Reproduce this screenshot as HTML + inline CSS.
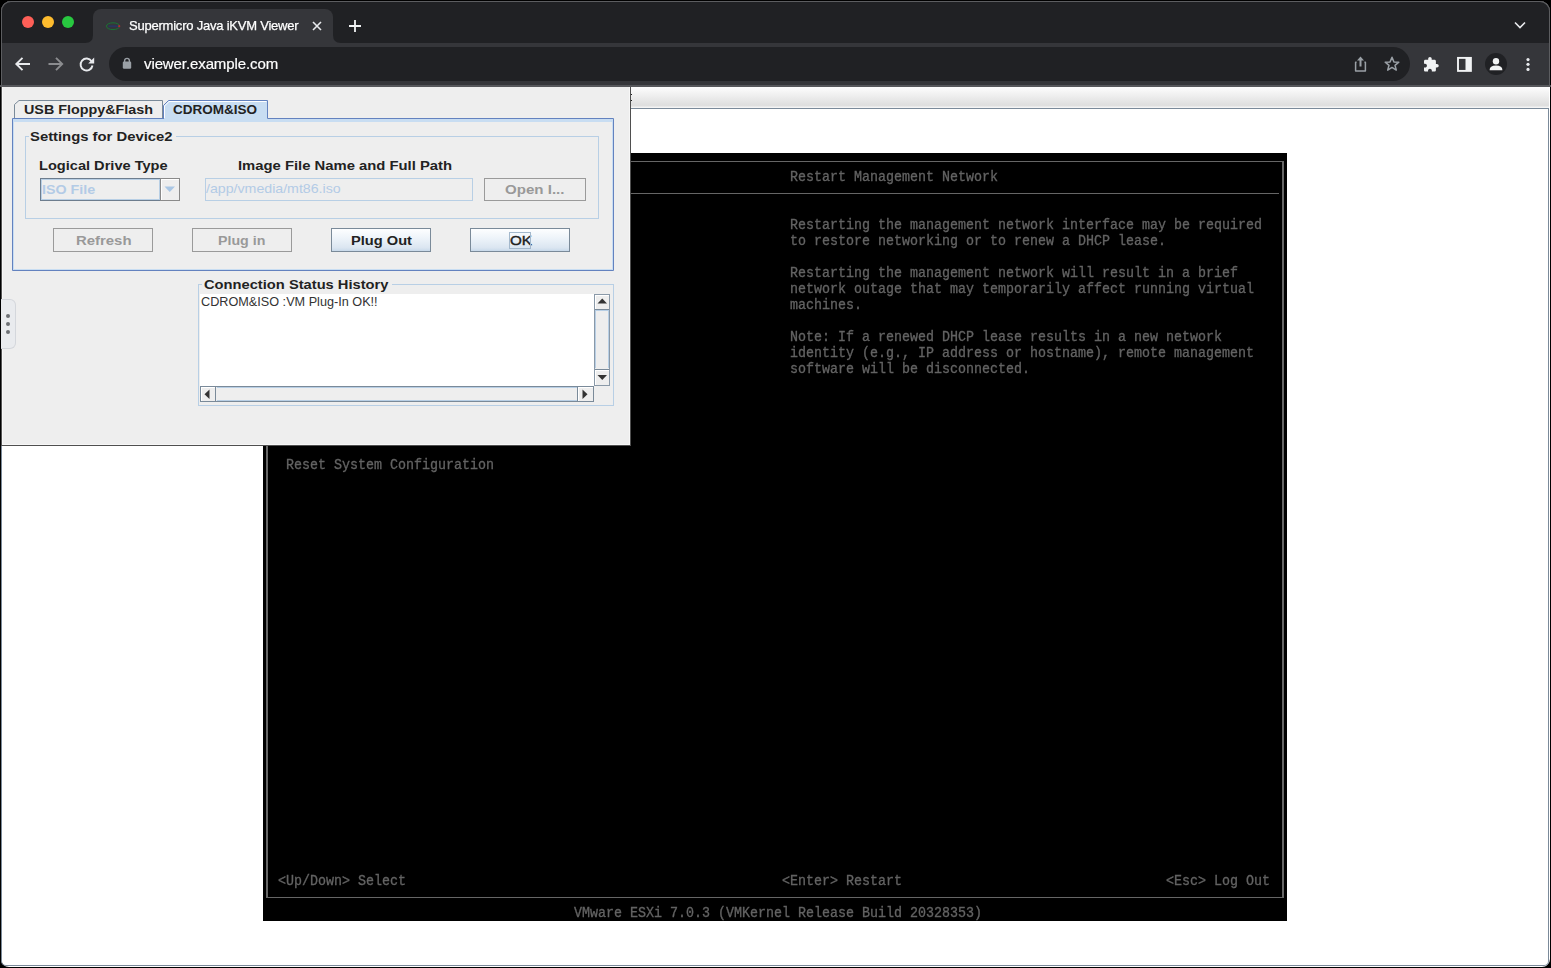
<!DOCTYPE html>
<html><head><meta charset="utf-8">
<style>
*{margin:0;padding:0;box-sizing:border-box}
html,body{width:1551px;height:968px;overflow:hidden;background:#000}
body{position:relative;font-family:"Liberation Sans",sans-serif}
.a{position:absolute}
#win{left:1px;top:1px;width:1549px;height:966px;border-radius:10px 10px 8px 8px;background:#fff;overflow:hidden}
#winb{left:1px;top:1px;width:1549px;height:86px;border-radius:10px 10px 0 0;border:1px solid #5c5d60;border-bottom:none;z-index:50;pointer-events:none}
#tabstrip{left:0;top:0;width:1551px;height:42px;background:#202124}
#toolbar{left:0;top:42px;width:1551px;height:43px;background:#35363a}
#tbline{left:0;top:85px;width:1551px;height:2px;background:#56575b}
#tab{left:93px;top:9px;width:240px;height:34px;background:#35363a;border-radius:8px 8px 0 0}
#omni{left:109px;top:47px;width:1301px;height:34px;background:#202124;border-radius:17px}
.ttxt{color:#e8eaed;white-space:nowrap}
/* page */
#kvmbar{left:630px;top:87px;width:919px;height:20px;background:linear-gradient(#fdfdfd,#eeeeee 45%,#dedede 92%,#ededed)}
#kvmline{left:630px;top:107px;width:919px;height:1px;background:#f4f4f4}
#kvmline2{left:630px;top:108px;width:919px;height:1px;background:#7b8a9a}
#frame{left:1px;top:108px;width:1548px;height:858px;border:1px solid #7b8a9a;border-top:none;border-radius:0 0 5px 5px}
#console{left:263px;top:153px;width:1024px;height:768px;background:#000}
.con{font-family:"Liberation Mono",monospace;color:#636363;will-change:transform;-webkit-text-stroke:0.3px #636363;font-size:13.333px;line-height:14.5454px;white-space:pre;transform:translate(1px,3px) scaleY(1.1);transform-origin:0 0}
.hl{background:#666}
/* dialog */
#dlg{left:1px;top:87px;width:630px;height:359px;background:#eeeeee;border-left:1px solid #555;border-right:1px solid #4f4f4f;border-bottom:1px solid #4f4f4f;box-shadow:inset 1px -1px 0 #f7f7f7, inset -1px 0 0 #f7f7f7}
.jb{font-weight:bold;font-size:13px;color:#222;white-space:nowrap;line-height:15px;transform-origin:0 0}
.jr{font-size:12px;color:#222;white-space:nowrap;line-height:14px;transform-origin:0 0}
.tb{border:1px solid #b8cfe5}
.btnd{border:1px solid #9a9a9a;background:#eeeeee;color:#999;text-align:center}
.btne{border:1px solid #7a8a99;background:linear-gradient(#fdfeff,#eef4fa 40%,#dbe6f1 85%,#c8d9ea);color:#222;text-align:center}
</style></head><body>
<div id="win" class="a">
  <div id="tabstrip" class="a"></div>
  <div id="toolbar" class="a"></div>
</div>
<div id="tbline" class="a"></div>
<div id="tab" class="a"></div>
<svg class="a" style="left:85px;top:35px" width="8" height="8"><path d="M0 8 Q8 8 8 0 L8 8 Z" fill="#35363a"/></svg>
<svg class="a" style="left:333px;top:35px" width="8" height="8"><path d="M0 0 Q0 8 8 8 L0 8 Z" fill="#35363a"/></svg>
<div id="omni" class="a"></div>

<!-- traffic lights -->
<div class="a" style="left:22px;top:16px;width:12px;height:12px;border-radius:6px;background:#fe5f57"></div>
<div class="a" style="left:42px;top:16px;width:12px;height:12px;border-radius:6px;background:#febc2e"></div>
<div class="a" style="left:62px;top:16px;width:12px;height:12px;border-radius:6px;background:#28c840"></div>

<!-- favicon -->
<svg class="a" style="left:104px;top:20px" width="18" height="12">
  <ellipse cx="9" cy="6.2" rx="6.6" ry="3.4" fill="none" stroke="#177a33" stroke-width="0.9"/>
  <rect x="4.5" y="5.3" width="9.5" height="1.8" fill="#2a3560"/>
  <circle cx="15.2" cy="6.2" r="1.1" fill="#b02a30"/>
</svg>
<div class="a ttxt" style="left:129px;top:18px;font-size:13px;letter-spacing:-0.22px;line-height:16px;color:#fff;-webkit-text-stroke:0.25px #fff;will-change:transform">Supermicro Java iKVM Viewer</div>
<svg class="a" style="left:311px;top:20px" width="12" height="12"><path d="M2 2 L10 10 M10 2 L2 10" stroke="#e8eaed" stroke-width="1.6"/></svg>
<svg class="a" style="left:347px;top:18px" width="16" height="16"><path d="M8 2 V14 M2 8 H14" stroke="#f1f3f4" stroke-width="1.8"/></svg>
<svg class="a" style="left:1513px;top:20px" width="14" height="10"><path d="M2 2.5 L7 7.5 L12 2.5" fill="none" stroke="#e8eaed" stroke-width="1.6"/></svg>

<!-- nav icons -->
<svg class="a" style="left:14px;top:56px" width="18" height="16"><path d="M16 8 H3 M8.5 1.8 L2.3 8 L8.5 14.2" fill="none" stroke="#e8eaed" stroke-width="1.9"/></svg>
<svg class="a" style="left:47px;top:56px" width="18" height="16"><path d="M1.5 8 H14.5 M9 1.8 L15.2 8 L9 14.2" fill="none" stroke="#8b8c8f" stroke-width="1.9"/></svg>
<svg class="a" style="left:78px;top:55px" width="18" height="18"><path d="M13.6 6.2 A6 6 0 1 0 14.5 10.5" fill="none" stroke="#e8eaed" stroke-width="1.9"/><path d="M16.2 2.6 V8.6 H10.2 Z" fill="#e8eaed"/></svg>
<svg class="a" style="left:122px;top:57px" width="10" height="13"><path d="M2.6 5 V3.8 A2.4 2.4 0 0 1 7.4 3.8 V5" fill="none" stroke="#9aa0a6" stroke-width="1.4"/><rect x="0.8" y="4.6" width="8.4" height="7.2" rx="1.2" fill="#9aa0a6"/></svg>
<div class="a ttxt" style="left:144px;top:55px;font-size:15px;line-height:18px;letter-spacing:-0.1px;color:#fff;-webkit-text-stroke:0.2px #fff;will-change:transform">viewer.example.com</div>

<!-- right toolbar icons -->
<svg class="a" style="left:1352px;top:55px" width="16" height="18"><path d="M4.6 7.2 H3.6 V15.9 H13.4 V7.2 H12.4" fill="none" stroke="#9aa0a6" stroke-width="1.5" stroke-linejoin="round"/><path d="M8.5 11.5 V3.8" stroke="#9aa0a6" stroke-width="2"/><path d="M5 5.4 L8.5 1.6 L12 5.4 Z" fill="#9aa0a6"/></svg>
<svg class="a" style="left:1383px;top:55px" width="18" height="18"><path d="M9 2.3 L10.9 6.9 L15.8 7.2 L12 10.3 L13.3 15.1 L9 12.4 L4.7 15.1 L6 10.3 L2.2 7.2 L7.1 6.9 Z" fill="none" stroke="#9aa0a6" stroke-width="1.5" stroke-linejoin="round"/></svg>
<svg class="a" style="left:1422px;top:55px" width="18" height="18"><g transform="translate(0.6,1.2) scale(0.7)"><path d="M20.5 11H19V7c0-1.1-.9-2-2-2h-4V3.5C13 2.12 11.88 1 10.5 1S8 2.12 8 3.5V5H4c-1.1 0-1.99.9-1.99 2v3.8H3.5c1.49 0 2.7 1.21 2.7 2.7s-1.21 2.7-2.7 2.7H2V20c0 1.1.9 2 2 2h3.8v-1.5c0-1.49 1.21-2.7 2.7-2.7 1.49 0 2.7 1.21 2.7 2.7V22H17c1.1 0 2-.9 2-2v-4h1.5c1.38 0 2.5-1.12 2.5-2.5S21.88 11 20.5 11z" fill="#f1f3f4"/></g></svg>
<svg class="a" style="left:1456px;top:56px" width="17" height="16"><rect x="2" y="1.9" width="12.9" height="13" fill="none" stroke="#f1f3f4" stroke-width="1.9"/><rect x="9.5" y="1.5" width="5.5" height="13.5" fill="#f1f3f4"/></svg>
<div class="a" style="left:1485px;top:53px;width:22px;height:22px;border-radius:11px;background:#202124"></div>
<svg class="a" style="left:1485px;top:53px" width="22" height="22"><circle cx="11" cy="8.3" r="3.2" fill="#f1f3f4"/><path d="M4.6 17.2 Q4.6 12.6 11 12.6 Q17.4 12.6 17.4 17.2 Z" fill="#f1f3f4"/></svg>
<svg class="a" style="left:1524px;top:56px" width="8" height="16"><circle cx="4" cy="3.6" r="1.6" fill="#e8eaed"/><circle cx="4" cy="8.3" r="1.6" fill="#e8eaed"/><circle cx="4" cy="13.4" r="1.6" fill="#e8eaed"/></svg>

<!-- page content -->
<div id="kvmbar" class="a"></div>
<div id="kvmline" class="a"></div>
<div id="kvmline2" class="a"></div>
<div id="frame" class="a"></div>
<div id="console" class="a"></div>
<!-- console box lines -->
<div class="a hl" style="left:266px;top:161px;width:1018px;height:1px"></div>
<div class="a hl" style="left:266px;top:161px;width:2px;height:737px"></div>
<div class="a hl" style="left:1282px;top:161px;width:2px;height:737px"></div>
<div class="a hl" style="left:266px;top:897px;width:1018px;height:1px"></div>
<div class="a hl" style="left:266px;top:193px;width:1013px;height:1px"></div>

<div class="a con" style="left:789px;top:167px">Restart Management Network</div>
<div class="a con" style="left:789px;top:215px">Restarting the management network interface may be required
to restore networking or to renew a DHCP lease.

Restarting the management network will result in a brief
network outage that may temporarily affect running virtual
machines.

Note: If a renewed DHCP lease results in a new network
identity (e.g., IP address or hostname), remote management
software will be disconnected.</div>
<div class="a con" style="left:285px;top:455px">Reset System Configuration</div>
<div class="a con" style="left:277px;top:871px">&lt;Up/Down&gt; Select</div>
<div class="a con" style="left:781px;top:871px">&lt;Enter&gt; Restart</div>
<div class="a con" style="left:1165px;top:871px">&lt;Esc&gt; Log Out</div>
<div class="a con" style="left:573px;top:903px">VMware ESXi 7.0.3 (VMKernel Release Build 20328353)</div>

<!-- dialog -->
<div id="dlg" class="a"></div>
<svg class="a" style="left:0;top:95px" width="640" height="200">
  <!-- USB tab -->
  <path d="M14.5 23.5 V9.5 L19 5.5 H162.5 V23.5" fill="#eeeeee" stroke="#7a8a99" stroke-width="1"/>
  <!-- CDROM tab -->
  <path d="M163.5 24 V10.5 L168.5 5.5 H267.5 V23.5" fill="#c8ddf2" stroke="#6382bf" stroke-width="1"/>
  <path d="M164.5 24 V11 L169 6.5 H266.5" fill="none" stroke="#ffffff" stroke-width="1"/>
  <!-- content panel -->
  <path d="M12.5 175.5 V23.5 H163.5 M267.5 23.5 H613.5 V175.5 H12.5" fill="none" stroke="#6382bf" stroke-width="1"/>
  <rect x="13" y="24" width="600" height="3" fill="#c8ddf2"/>
  <rect x="164" y="23" width="103" height="2" fill="#c8ddf2"/>
  <path d="M13.5 175 V24 M612.5 24 V175 M13 174.5 H613" fill="none" stroke="#c8ddf2" stroke-width="1"/>
</svg>
<div id="t_usb" class="a jb" style="left:24.19px;top:102px;transform:scaleX(1.1018)">USB Floppy&amp;Flash</div>
<div id="t_cdrom" class="a jb" style="left:173.36px;top:102px;transform:scaleX(1.0401)">CDROM&amp;ISO</div>

<!-- titled border Settings -->
<div class="a tb" style="left:25px;top:136px;width:574px;height:83px"></div>
<div class="a" style="left:29px;top:130px;width:147px;height:12px;background:#eeeeee"></div>
<div id="t_settings" class="a jb" style="left:30.44px;top:129px;transform:scaleX(1.1403)">Settings for Device2</div>
<div id="t_logical" class="a jb" style="left:39.27px;top:158px;transform:scaleX(1.1221)">Logical Drive Type</div>
<div id="t_image" class="a jb" style="left:238.21px;top:158px;transform:scaleX(1.1398)">Image File Name and Full Path</div>

<!-- combo -->
<div class="a" style="left:40px;top:178px;width:121px;height:23px;border:1px solid #6d7d8e;background:#eeeeee"></div>
<div class="a" style="left:41px;top:179px;width:119px;height:21px;border:1px solid #b8cfe5"></div>
<div class="a" style="left:160px;top:178px;width:20px;height:23px;border:1px solid #8a8a8a;border-left:1px solid #8a8a8a;background:#eeeeee;box-shadow:inset 1px 1px 0 #fff"></div>
<svg class="a" style="left:164px;top:186px" width="12" height="7"><path d="M0.5 0.5 H11 L5.75 6 Z" fill="#a9c6e4"/></svg>
<div id="t_iso" class="a jb" style="left:42.38px;top:182px;transform:scaleX(1.0980);color:#b3cbe6">ISO File</div>

<!-- text field -->
<div class="a" style="left:205px;top:178px;width:268px;height:23px;border:1px solid #b8cfe5"></div>
<div id="t_path" class="a jr" style="left:206.13px;top:182px;transform:scaleX(1.0894);font-size:13px;color:#b3cbe6">/app/vmedia/mt86.iso</div>

<!-- Open button -->
<div class="a btnd" style="left:484px;top:178px;width:102px;height:23px"></div>
<div id="t_open" class="a jb" style="left:505.29px;top:182px;transform:scaleX(1.1603);color:#999">Open I...</div>

<!-- buttons -->
<div class="a btnd" style="left:53px;top:228px;width:100px;height:24px"></div>
<div id="t_refresh" class="a jb" style="left:75.94px;top:233px;transform:scaleX(1.1462);color:#999">Refresh</div>
<div class="a btnd" style="left:192px;top:228px;width:100px;height:24px"></div>
<div id="t_plugin" class="a jb" style="left:218.00px;top:233px;transform:scaleX(1.0930);color:#999">Plug in</div>
<div class="a btne" style="left:331px;top:228px;width:100px;height:24px"></div>
<div id="t_plugout" class="a jb" style="left:350.80px;top:233px;transform:scaleX(1.1263)">Plug Out</div>
<div class="a btne" style="left:470px;top:228px;width:100px;height:24px"></div>
<div id="t_ok" class="a jb" style="left:509.79px;top:233px;transform:scaleX(1.17);font-weight:normal;-webkit-text-stroke:0.4px #222">OK</div>
<div class="a" style="left:509px;top:232px;width:22px;height:17px;border:1px solid #a3b8cc"></div>

<!-- Connection status -->
<div class="a tb" style="left:198px;top:284px;width:416px;height:122px"></div>
<div class="a" style="left:202px;top:278px;width:190px;height:12px;background:#eeeeee"></div>
<div id="t_conn" class="a jb" style="left:204.00px;top:277px;transform:scaleX(1.1301)">Connection Status History</div>
<div class="a" style="left:200px;top:294px;width:394px;height:92px;background:#fff"></div>
<div id="t_hist" class="a jr" style="left:200.66px;top:295px;transform:scaleX(1.0554);color:#333">CDROM&amp;ISO :VM Plug-In OK!!</div>
<!-- vertical scrollbar -->
<div class="a" style="left:594px;top:294px;width:16px;height:92px;background:#eeeeee;border:1px solid #8a99a8"></div>
<div class="a" style="left:595px;top:295px;width:14px;height:15px;background:#eeeeee;border-bottom:1px solid #7a8a99;box-shadow:inset 1px 1px 0 #fff"></div>
<div class="a" style="left:595px;top:310px;width:14px;height:58px;background:#eeeeee;border-left:1px solid #b8cfe5;border-right:1px solid #b8cfe5;border-top:1px solid #b8cfe5"></div>
<div class="a" style="left:595px;top:369px;width:14px;height:16px;background:#eeeeee;border-top:1px solid #7a8a99;box-shadow:inset 1px 1px 0 #fff"></div>
<svg class="a" style="left:597px;top:297px" width="11" height="8"><path d="M0.5 6.5 H10 L5.25 1.5 Z" fill="#333"/></svg>
<svg class="a" style="left:597px;top:374px" width="11" height="8"><path d="M0.5 1 H10 L5.25 6 Z" fill="#333"/></svg>
<!-- horizontal scrollbar -->
<div class="a" style="left:200px;top:386px;width:394px;height:16px;background:#eeeeee;border:1px solid #7a8a99"></div>
<div class="a" style="left:201px;top:387px;width:15px;height:14px;border-right:1px solid #7a8a99;box-shadow:inset 1px 1px 0 #fff"></div>
<div class="a" style="left:217px;top:387px;width:360px;height:14px;border-top:1px solid #b8cfe5;border-bottom:1px solid #b8cfe5"></div>
<div class="a" style="left:577px;top:387px;width:16px;height:14px;border-left:1px solid #7a8a99;box-shadow:inset 1px 1px 0 #fff"></div>
<svg class="a" style="left:203px;top:389px" width="8" height="11"><path d="M6.5 0.5 V10 L1.5 5.25 Z" fill="#333"/></svg>
<svg class="a" style="left:581px;top:389px" width="8" height="11"><path d="M1.5 0.5 V10 L6.5 5.25 Z" fill="#333"/></svg>

<!-- side handle -->
<div class="a" style="left:1px;top:299px;width:15px;height:50px;border:1px solid #d4d7dc;border-left:none;border-radius:0 6px 6px 0;background:#e9ebee"></div>
<div class="a" style="left:6px;top:314px;width:4px;height:4px;border-radius:2px;background:#6c6f73"></div>
<div class="a" style="left:6px;top:322px;width:4px;height:4px;border-radius:2px;background:#6c6f73"></div>
<div class="a" style="left:6px;top:330px;width:4px;height:4px;border-radius:2px;background:#6c6f73"></div>

<div class="a" style="left:631px;top:94px;width:1px;height:1px;background:#222"></div>
<div class="a" style="left:631px;top:100px;width:1px;height:1px;background:#222"></div>
<div id="winb" class="a"></div>
</body></html>
